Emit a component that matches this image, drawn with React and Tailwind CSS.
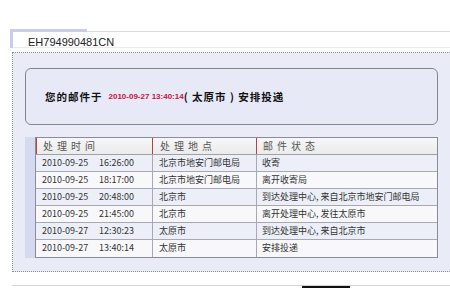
import React from "react";

const rows = [
  ["2010-09-25", "16:26:00", "北京市地安门邮电局", "收寄"],
  ["2010-09-25", "18:17:00", "北京市地安门邮电局", "离开收寄局"],
  ["2010-09-25", "20:48:00", "北京市", "到达处理中心, 来自北京市地安门邮电局"],
  ["2010-09-25", "21:45:00", "北京市", "离开处理中心, 发往太原市"],
  ["2010-09-27", "12:30:23", "太原市", "到达处理中心, 来自北京市"],
  ["2010-09-27", "13:40:14", "太原市", "安排投递"],
];

const cjk = { fontFamily: '"Noto Sans CJK SC", sans-serif' };

function App() {
  return (
    <div className="w-[450px] h-[288px] bg-white overflow-hidden">
      {/* 标签头 */}
      <div className="pt-[29px] pl-[10px]">
        <div className="flex h-[3px]">
          <div className="w-[77px] bg-[#c9cde6]" />
          <div className="flex-1 border-b border-[#dcdcdc]" />
        </div>
        <div className="flex h-[16px]">
          <div className="w-[3px] bg-[#c9cde6]" />
          <div
            className="flex-1 pl-[15px] pt-[4px] border-b border-[#ececec] text-[11px] leading-[12px] text-[#222]"
            style={{ fontFamily: '"Liberation Sans", Arial, sans-serif' }}
          >
            EH794990481CN
          </div>
        </div>
      </div>

      {/* 主体 */}
      <div className="mt-[4px] ml-[12px] h-[220px] border-t border-l border-b border-dotted border-[#8f8f8f] bg-[#e9ebf7] pl-[12px] pt-[15px]">
        <div
          className="w-[413px] h-[57px] rounded-[6px] border border-[#85858f] bg-[#e7eaf6] flex items-center pl-[19px] text-[10.5px] font-bold text-[#111]"
          style={cjk}
        >
          <span className="tracking-[1px]">您的邮件于</span>
          <span
            className="ml-[6px] text-[8px] font-bold text-[#cc1040]"
            style={{ fontFamily: '"Liberation Sans", Arial, sans-serif' }}
          >
            2010-09-27 13:40:14
          </span>
          <span className="tracking-[1px]">( 太原市 ) 安排投递</span>
        </div>

        <div className="flex mt-[12px]">
          <div className="w-[10px] bg-[#d6daee]" />
          <div
            className="w-[403px] border border-[#8c8c96] text-[9px] text-[#333]"
            style={cjk}
          >
            <div className="grid grid-cols-[116px_104px_1fr] h-[17px] bg-gradient-to-b from-[#f7f7f7] to-[#ebebeb] border-b border-[#a0a0a8] text-[10px] text-[#555] leading-[16px]">
              <div className="border-l border-[#b8404a] pl-[6px] tracking-[4px]">处理时间</div>
              <div className="border-l border-[#b8404a] pl-[7px] tracking-[4px]">处理地点</div>
              <div className="border-l border-[#b8404a] pl-[6px] tracking-[4px]">邮件状态</div>
            </div>
            {rows.map((r, i) => (
              <div
                key={i}
                className={
                  "grid grid-cols-[116px_104px_1fr] h-[17px] leading-[16px] " +
                  (i < rows.length - 1 ? "border-b border-[#a8a8b2] " : "") +
                  (i % 2 === 0 ? "bg-[#eceff8]" : "bg-[#f8f8fb]")
                }
              >
                <div className="pl-[6px] flex">
                  <span className="w-[57px]">{r[0]}</span>
                  <span>{r[1]}</span>
                </div>
                <div className="border-l border-[#a8a8b2] pl-[6px]">{r[2]}</div>
                <div className="border-l border-[#a8a8b2] pl-[5px]">{r[3]}</div>
              </div>
            ))}
          </div>
        </div>
      </div>

      {/* 底部 */}
      <div className="mt-[13px] ml-[12px] h-[4px] border-t border-[#d4d4d4] relative">
        <div className="absolute left-[290px] top-0 w-[48px] h-[3px] bg-[#111]" />
      </div>
    </div>
  );
}

export default App;
